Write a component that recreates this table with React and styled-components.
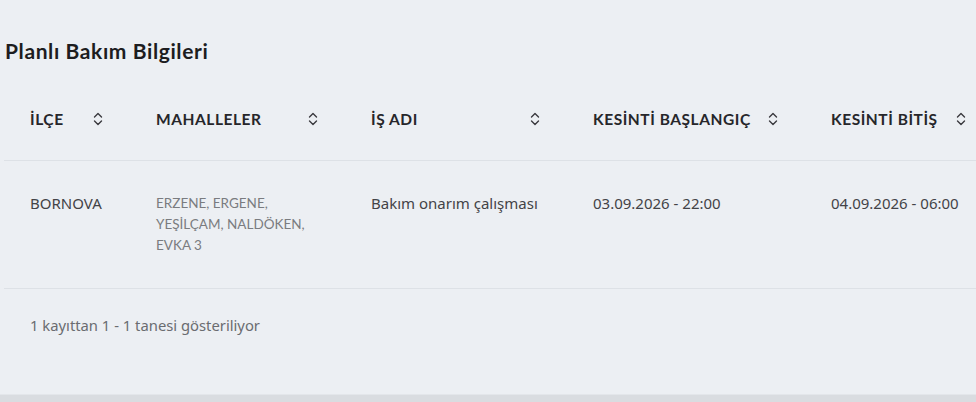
import React from 'react'
import styled, { createGlobalStyle } from 'styled-components'

const GlobalStyle = createGlobalStyle`
  html, body {
    margin: 0;
    padding: 0;
    background: #eceff3;
    overflow: hidden;
  }
  body {
    font-family: Lato, "Noto Sans", sans-serif;
    color: #2b2b2b;
  }
`

const Page = styled.div`
  width: 976px;
  height: 402px;
  display: flex;
  flex-direction: column;
  background: #eceff3;
`

const Section = styled.div`
  flex: 1;
  padding: 36px 0 0 4px;
`

const Title = styled.h2`
  margin: 0 0 0 1px;
  font-size: 21px;
  font-weight: 700;
  letter-spacing: 0.6px;
  color: #1d1d1f;
  line-height: 30px;
`

const Table = styled.div`
  margin-top: 11px;
  width: 1000px;
`

const Row = styled.div`
  display: grid;
  grid-template-columns: 126px 215px 222px 238px 188px;
  border-bottom: 1px solid #dde1e6;
  align-items: ${({ $head }) => ($head ? 'center' : 'start')};
  height: ${({ $head }) => ($head ? '83px' : 'auto')};
  padding: ${({ $head }) => ($head ? '0' : '32px 0 32px')};
`

const HeadCell = styled.div`
  display: flex;
  align-items: center;
  justify-content: space-between;
  padding: 0 26px 0 26px;
  font-size: 15.5px;
  font-weight: 700;
  color: #26262a;
  letter-spacing: 0.55px;
`

const Cell = styled.div`
  padding: 0 26px;
  white-space: nowrap;
  font-family: ${({ $muted }) => ($muted ? 'Lato, sans-serif' : '"Noto Sans", sans-serif')};
  font-size: ${({ $muted }) => ($muted ? '13.5px' : '15px')};
  line-height: 21px;
  color: ${({ $muted }) => ($muted ? '#7a7c80' : '#434347')};
`

const Info = styled.div`
  padding: 26px 26px;
  font-family: "Noto Sans", sans-serif;
  font-size: 14.8px;
  color: #6a6c70;
`

const BottomBar = styled.div`
  height: 7px;
  background: #d9dce0;
  border-top: 1px solid #e3e6ea;
`

const SortIcon = () => (
  <svg width="12" height="18" viewBox="0 0 12 18" fill="none" stroke="#3a3a3e" strokeWidth="1.4" strokeLinecap="round" strokeLinejoin="round">
    <path d="M2.5 7 L6 3.5 L9.5 7" />
    <path d="M2.5 11 L6 14.5 L9.5 11" />
  </svg>
)

const columns = ['İLÇE', 'MAHALLELER', 'İŞ ADI', 'KESİNTİ BAŞLANGIÇ', 'KESİNTİ BİTİŞ']

const App = () => {
  return (
    <Page>
      <GlobalStyle />
      <Section>
        <Title>Planlı Bakım Bilgileri</Title>
        <Table>
          <Row $head>
            {columns.map(c => (
              <HeadCell key={c}>
                {c}
                <SortIcon />
              </HeadCell>
            ))}
          </Row>
          <Row>
            <Cell>BORNOVA</Cell>
            <Cell $muted>ERZENE, ERGENE,<br />YEŞİLÇAM, NALDÖKEN,<br />EVKA 3</Cell>
            <Cell>Bakım onarım çalışması</Cell>
            <Cell>03.09.2026 - 22:00</Cell>
            <Cell>04.09.2026 - 06:00</Cell>
          </Row>
        </Table>
        <Info>1 kayıttan 1 - 1 tanesi gösteriliyor</Info>
      </Section>
      <BottomBar />
    </Page>
  )
}

export default App
